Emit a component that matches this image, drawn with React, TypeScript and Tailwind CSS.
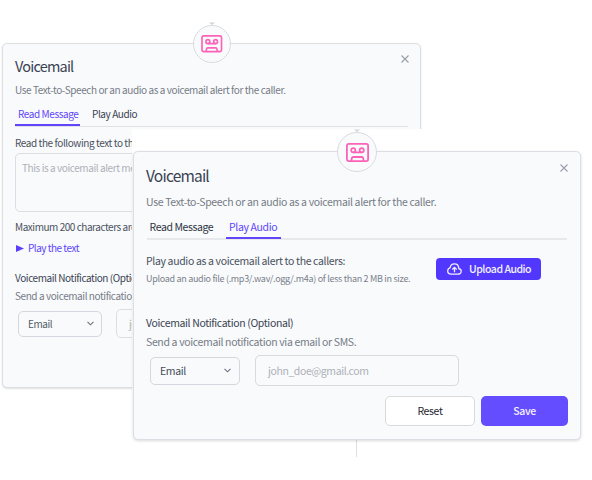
import type { ReactNode } from 'react';

function Connector({ className, size, icon }: { className: string; size: string; icon: string }) {
  return (
    <div className={`absolute flex flex-col items-center ${className}`}>
      <svg width="6" height="3" viewBox="0 0 6 3" className="block shrink-0">
        <path d="M0 0.5h6L3 3z" fill="#d2d4db" />
      </svg>
      <div className={`flex shrink-0 items-center justify-center rounded-full border border-[#d9dbe1] bg-[#f8fafc] ${size}`}>
        <svg viewBox="0 0 23 19" fill="none" stroke="#fc63b8" strokeWidth="1.8" className={`block ${icon}`}>
          <rect x="0.9" y="0.9" width="21.2" height="17.2" rx="1.8" />
          <circle cx="7.3" cy="7.2" r="2.1" />
          <circle cx="15.7" cy="7.2" r="2.1" />
          <path d="M7.3 9.400h8.400M5.300 18l.6-3q.2-1 1.200-1h8.800q1 0 1.200 1l.6 3" />
        </svg>
      </div>
    </div>
  );
}

function Close() {
  return (
    <svg width="8" height="8" viewBox="0 0 8 8" className="block" stroke="#999eab" strokeWidth="1.1">
      <path d="M.5.5l7 7M7.5.5l-7 7" />
    </svg>
  );
}

function Chevron() {
  return (
    <svg width="7" height="5" viewBox="0 0 7 5" className="block" fill="none" stroke="#6b7280" strokeWidth="1.1">
      <path d="M.5.8l3 3 3-3" />
    </svg>
  );
}

function Line({ className = '', children }: { className?: string; children: ReactNode }) {
  return <div className={`whitespace-nowrap ${className}`}>{children}</div>;
}

function ReadMessagePanel() {
  return (
    <section className="absolute top-[43px] left-[2px] h-[345px] w-[419px] rounded-[5px] border border-[#dcdee4] bg-[#f8fafc] pl-3 text-[10px] leading-4 tracking-[-0.42px] shadow-[0_1px_2px_rgba(0,0,0,0.12)]">
      <div className="flex h-[33px] items-end justify-between pr-[11px]">
        <Line className="text-[14.5px] leading-[22px] tracking-[-0.8px] text-[#3b4252]">Voicemail</Line>
        <div className="pb-[14px]"><Close /></div>
      </div>
      <Line className="mt-[5px] h-4 text-[#777c86]">
        Use Text-to-Speech or an audio as a voicemail alert for the caller.
      </Line>
      <div className="mr-3 mt-[6px] flex h-[23px] border-b border-[#dfe1e7] leading-[20px]">
        <div className="-mb-px h-[22px] w-[65px] border-b-2 border-[#6046fb] pl-[3px] text-[#6046fb]">
          <Line>Read Message</Line>
        </div>
        <Line className="pl-3 text-[#3b4252]">Play Audio</Line>
      </div>
      <Line className="mt-[8px] h-4 text-[#4b515d]">Read the following text to the</Line>
      <div className="mt-[2px] mr-3 h-[59px] rounded-[5px] border border-[#dcdee4] pl-[6px] pt-[6px]">
        <Line className="h-4 text-[#aeb1b8]">This is a voicemail alert me</Line>
      </div>
      <Line className="mt-[7px] h-4 tracking-[-0.46px] text-[#4b515d]">Maximum 200 characters are</Line>
      <div className="mt-[5px] flex h-4 items-center gap-1 pl-[1px]">
        <svg width="8" height="7" viewBox="0 0 8 7" className="block">
          <path d="M0 0l8 3.5L0 7z" fill="#5b3ffb" />
        </svg>
        <Line className="tracking-[-0.5px] text-[#6046fb]">Play the text</Line>
      </div>
      <Line className="mt-[14px] h-4 text-[#3b4252]">Voicemail Notification (Optional)</Line>
      <Line className="mt-[2px] h-4 text-[#777c86]">Send a voicemail notification</Line>
      <div className="mt-[5px] flex items-center gap-[14px] pl-[3px]">
        <div className="flex h-[26px] w-[84px] items-center justify-between rounded-[5px] border border-[#d5d7de] pr-[7px] pl-[9px]">
          <Line className="text-[#555a65]">Email</Line>
          <Chevron />
        </div>
        <div className="flex h-[29px] w-[190px] items-center rounded-[5px] border border-[#dcdee4] pl-3">
          <Line className="text-[#aeb1b8]">john_doe@gmail.com</Line>
        </div>
      </div>
    </section>
  );
}

function PlayAudioPanel() {
  return (
    <section className="absolute top-[151px] left-[133px] h-[289px] w-[448px] rounded-[5px] border border-[#dcdee4] bg-[#f8fafc] pl-[12px] text-[10.5px] leading-4 tracking-[-0.35px] shadow-[0_1px_3px_rgba(0,0,0,0.15)]">
      <div className="flex h-[34px] items-end justify-between pr-[12px]">
        <Line className="text-[15.5px] leading-[22px] tracking-[-0.8px] text-[#3b4252]">Voicemail</Line>
        <div className="pb-[14px]"><Close /></div>
      </div>
      <Line className="mt-[8px] h-4 text-[#777c86]">
        Use Text-to-Speech or an audio as a voicemail alert for the caller.
      </Line>
      <div className="mr-[13px] ml-px mt-[7px] flex h-[23px] border-b-2 border-[#e7e9ed] leading-[19px]">
        <Line className="w-[79px] pl-[2.5px] tracking-[-0.41px] text-[#2f3542]">Read Message</Line>
        <div className="-mb-px h-[22px] w-[55px] border-b-2 border-[#6046fb] pl-[3px] text-[#6046fb]">
          <Line>Play Audio</Line>
        </div>
      </div>
      <div className="mt-[13px] flex justify-between pr-[39px]">
        <div>
          <Line className="h-4 text-[#4b515d]">Play audio as a voicemail alert to the callers:</Line>
          <Line className="mt-[2px] h-4 text-[9px] tracking-[-0.3px] text-[#7b808a]">
            Upload an audio file (.mp3/.wav/.ogg/.m4a) of less than 2 MB in size.
          </Line>
        </div>
        <div className="mt-[5px] flex h-[22px] w-[105px] items-center gap-[7px] rounded-[4px] bg-[#5238ff] pl-[11px]">
          <svg width="15" height="12" viewBox="0 0 15 12" className="block shrink-0" fill="none" stroke="#f1eeff" strokeWidth="1.3">
            <path d="M4.2 11.2h6.5c2.1 0 3.5-1.1 3.5-2.9 0-1.500-1-2.500-2.400-2.700C11.700 2.700 9.800.8 7.400.8 5 .8 3.500 2.500 3.200 4.600 1.600 5.200.7 6.400.7 8.100c0 1.900 1.400 3.100 3.500 3.100z" />
            <path d="M7.500 9.300V4.500M5.300 6.500l2.200-2.200 2.200 2.200" />
          </svg>
          <Line className="font-medium tracking-[-0.48px] text-[#f4f2ff]">Upload Audio</Line>
        </div>
      </div>
      <Line className="mt-[28px] h-4 tracking-[-0.37px] text-[#3b4252]">Voicemail Notification (Optional)</Line>
      <Line className="mt-[3px] h-4 text-[#777c86]">Send a voicemail notification via email or SMS.</Line>
      <div className="mt-[5px] flex items-center gap-[15px] pl-[4px]">
        <div className="flex h-[28px] w-[90px] items-center justify-between rounded-[5px] border border-[#d5d7de] pr-[8px] pl-[9px]">
          <Line className="text-[#454c5b]">Email</Line>
          <Chevron />
        </div>
        <div className="flex h-[31px] w-[204px] items-center rounded-[5px] border border-[#d8dae0] pl-[12px]">
          <Line className="tracking-[-0.41px] text-[#aeb1b8]">john_doe@gmail.com</Line>
        </div>
      </div>
      <div className="mt-[10px] flex justify-end gap-[6px] pr-[12px]">
        <div className="flex h-[30px] w-[90px] items-center justify-center rounded-[5px] border border-[#d8dae0] bg-white text-[#1f2633]">
          <Line>Reset</Line>
        </div>
        <div className="flex h-[30px] w-[87px] items-center justify-center rounded-[5px] bg-[#644dff] font-medium text-[#f4f2ff]">
          <Line>Save</Line>
        </div>
      </div>
    </section>
  );
}

export default function App() {
  return (
    <main className="relative h-[480px] w-[592px] overflow-hidden bg-white font-['Noto_Sans_CJK_SC',sans-serif]">
      <ReadMessagePanel />
      <Connector className="top-[22px] left-[193px] w-[38px]" size="size-[38px]" icon="h-[17.5px] w-[21.5px]" />
      <div className="absolute top-[129px] left-[132px] h-[328px] w-[460px] bg-white" />
      <div className="absolute top-[440px] left-[356px] h-[17px] w-px bg-[#dcdee4]" />
      <PlayAudioPanel />
      <Connector className="top-[129px] left-[337px] w-[40px]" size="size-[40px]" icon="h-[19px] w-[23px]" />
    </main>
  );
}
